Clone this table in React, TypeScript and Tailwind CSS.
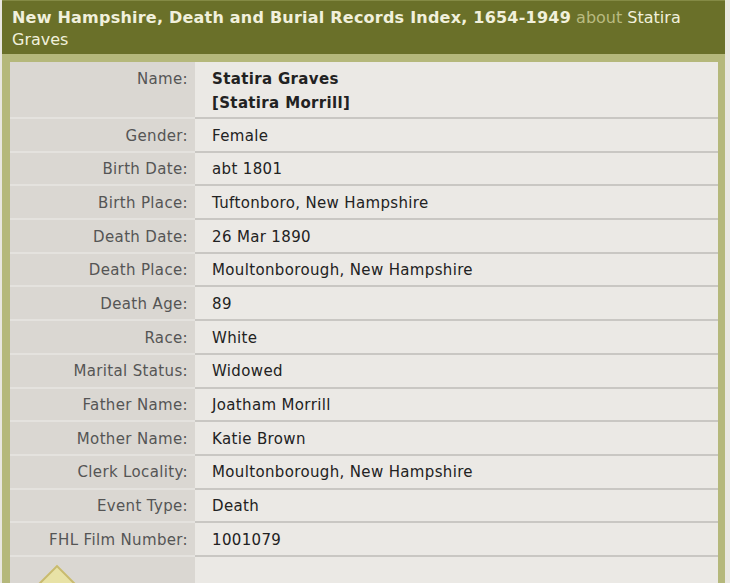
import React from "react";

const rows: [string, string][] = [
  ["Gender:", "Female"],
  ["Birth Date:", "abt 1801"],
  ["Birth Place:", "Tuftonboro, New Hampshire"],
  ["Death Date:", "26 Mar 1890"],
  ["Death Place:", "Moultonborough, New Hampshire"],
  ["Death Age:", "89"],
  ["Race:", "White"],
  ["Marital Status:", "Widowed"],
  ["Father Name:", "Joatham Morrill"],
  ["Mother Name:", "Katie Brown"],
  ["Clerk Locality:", "Moultonborough, New Hampshire"],
  ["Event Type:", "Death"],
  ["FHL Film Number:", "1001079"],
];

export default function App() {
  return (
    <div className="w-[730px] h-[583px] overflow-hidden bg-[#e9e7e1] pl-[2px] font-['DejaVu_Sans',sans-serif]">
      <div className="w-[723px] h-full bg-[#b5b87b] flex flex-col">
        {/* title bar */}
        <div className="h-[54px] bg-[#6a7029] border-t border-[#848a45] pl-[10px] pr-[40px] pt-[6px] text-[16px] leading-[22px] text-[#f1f0dc]">
          <span className="font-bold tracking-[0.22px]">New Hampshire, Death and Burial Records Index, 1654-1949</span>{" "}
          <span className="text-[#b9bb80]">about</span> <span>Statira</span>{" "}
          <span>Graves</span>
        </div>

        <div className="relative flex-1 mt-[8px] ml-[8px] mr-[7px] bg-[#dad7d2] overflow-hidden text-[15px] tracking-[0.35px]">
          <div className="flex h-[57px] border-b-2 border-[#e4e2de]">
            <div className="w-[185px] shrink-0 text-right pr-[7px] pt-[5px] leading-[24px] text-[#555]">Name:</div>
            <div className="flex-1 bg-[#ebe9e5] pl-[17px] pt-[5px] leading-[24px] font-bold text-[#222] border-b-2 border-[#c9c7c3] -mb-[2px]">
              <div>Statira Graves</div>
              <div>[Statira Morrill]</div>
            </div>
          </div>
          {rows.map(([label, value]) => (
            <div key={label} className="flex h-[33.7px] border-b-2 border-[#e4e2de]">
              <div className="w-[185px] shrink-0 pr-[7px] pt-[2px] flex items-center justify-end text-[#555]">{label}</div>
              <div className="flex-1 bg-[#ebe9e5] pl-[17px] pt-[2px] flex items-center text-[#222] border-b-2 border-[#c9c7c3] -mb-[2px]">{value}</div>
            </div>
          ))}
          <div className="flex h-[40px]">
            <div className="w-[185px] shrink-0" />
            <div className="flex-1 bg-[#ebe9e5]" />
          </div>
          <div className="absolute left-[27px] top-[511px] w-[40px] h-[40px] rotate-45 bg-[#e8e2a6] border-2 border-[#c8ba70]" />
        </div>
      </div>
    </div>
  );
}
